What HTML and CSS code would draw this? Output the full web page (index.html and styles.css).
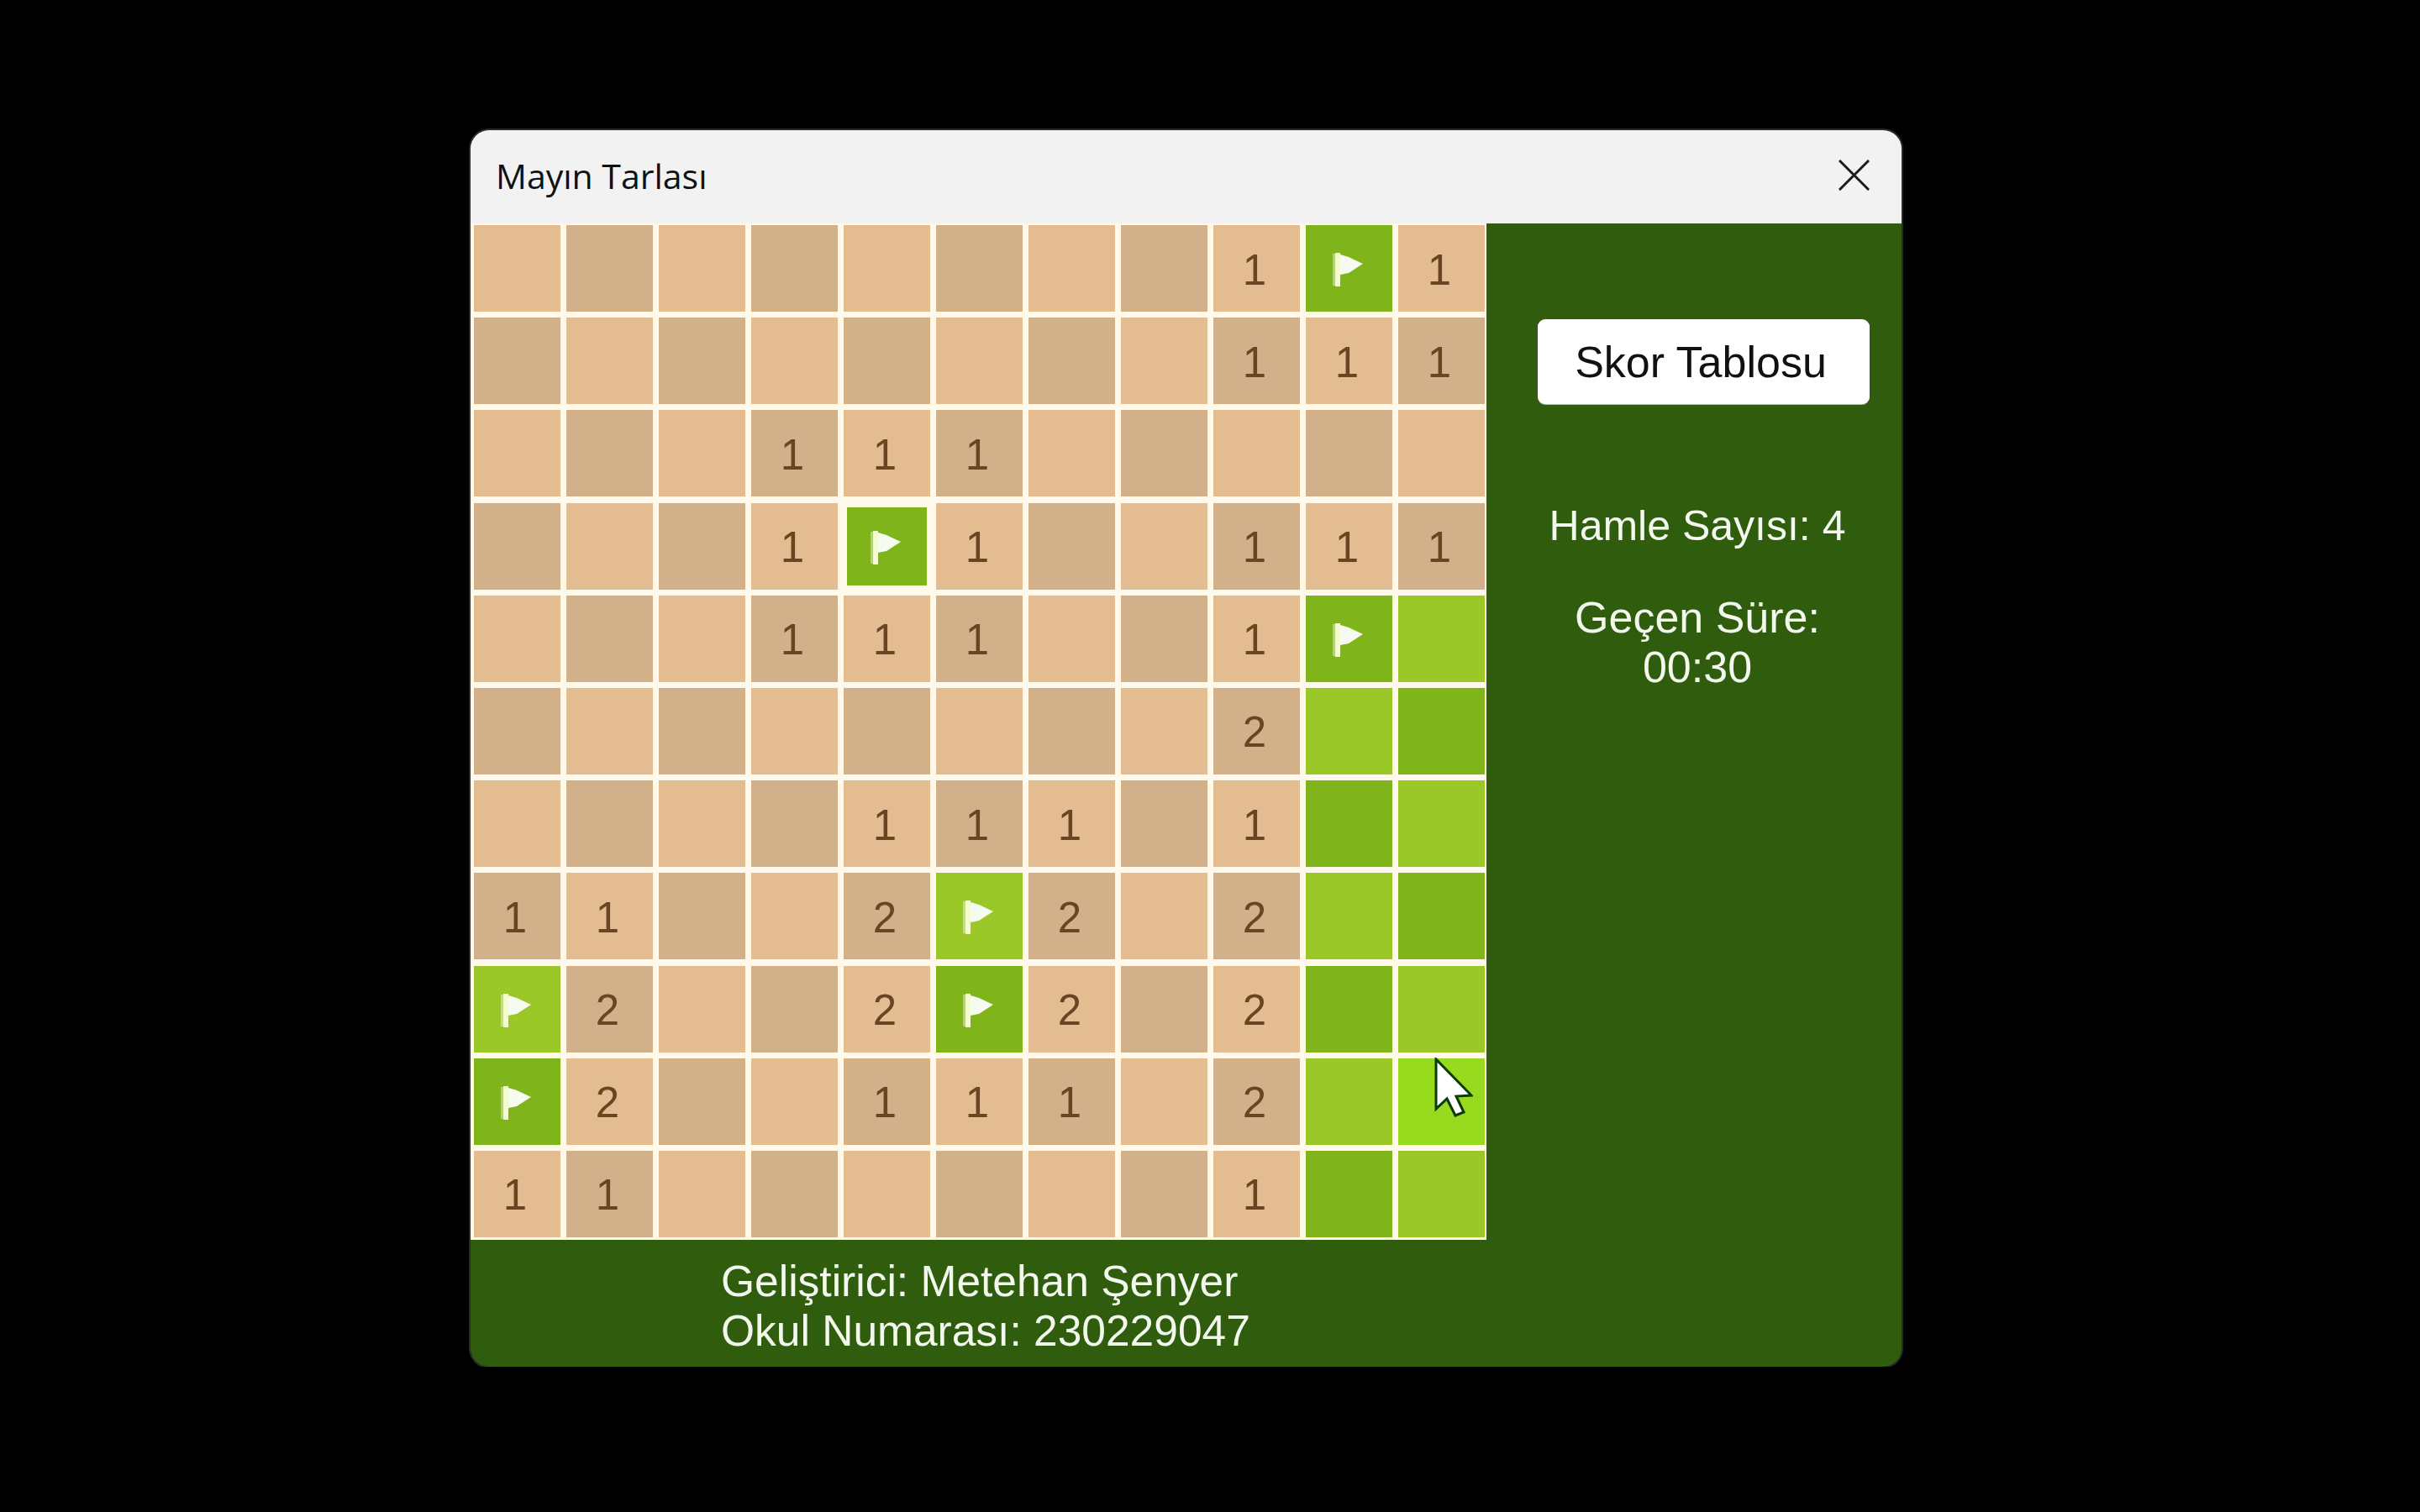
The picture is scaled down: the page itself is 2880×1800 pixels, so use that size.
FILE: index.html
```html
<!DOCTYPE html>
<html lang="tr">
<head>
    <meta charset="UTF-8">
    <title>Mayın Tarlası</title>
    <link rel="stylesheet" href="styles.css">
</head>
<body>
    <svg class="defs">
        <symbol id="flag" viewBox="0 0 40 40">
            <rect x="3" y="1" width="3" height="38" fill="#fff" fill-opacity="0.4"/>
            <rect x="6" y="0" width="6" height="40" fill="#f4fbd0"/>
            <path d="M12 2 L22 5 L39 13 L22 24 L12 26 Z" fill="#f6fbf2"/>
        </symbol>
    </svg>

    <div class="window">
        <div class="titlebar">
            <span class="title">Mayın Tarlası</span>
            <svg class="close" viewBox="0 0 37 37"><path d="M1 1 L36 36 M36 1 L1 36"/></svg>
        </div>
        <div class="content">
            <div class="left">
                <div class="board">
                    <div class="cell l"></div><div class="cell d"></div><div class="cell l"></div><div class="cell d"></div><div class="cell l"></div><div class="cell d"></div><div class="cell l"></div><div class="cell d"></div><div class="cell l">1</div><div class="cell gd"><svg class="flag"><use href="#flag"/></svg></div><div class="cell l">1</div>
                    <div class="cell d"></div><div class="cell l"></div><div class="cell d"></div><div class="cell l"></div><div class="cell d"></div><div class="cell l"></div><div class="cell d"></div><div class="cell l"></div><div class="cell d">1</div><div class="cell l">1</div><div class="cell d">1</div>
                    <div class="cell l"></div><div class="cell d"></div><div class="cell l"></div><div class="cell d">1</div><div class="cell l">1</div><div class="cell d">1</div><div class="cell l"></div><div class="cell d"></div><div class="cell l"></div><div class="cell d"></div><div class="cell l"></div>
                    <div class="cell d"></div><div class="cell l"></div><div class="cell d"></div><div class="cell l">1</div><div class="cell gd focus"><svg class="flag"><use href="#flag"/></svg></div><div class="cell l">1</div><div class="cell d"></div><div class="cell l"></div><div class="cell d">1</div><div class="cell l">1</div><div class="cell d">1</div>
                    <div class="cell l"></div><div class="cell d"></div><div class="cell l"></div><div class="cell d">1</div><div class="cell l">1</div><div class="cell d">1</div><div class="cell l"></div><div class="cell d"></div><div class="cell l">1</div><div class="cell gd"><svg class="flag"><use href="#flag"/></svg></div><div class="cell gl"></div>
                    <div class="cell d"></div><div class="cell l"></div><div class="cell d"></div><div class="cell l"></div><div class="cell d"></div><div class="cell l"></div><div class="cell d"></div><div class="cell l"></div><div class="cell d">2</div><div class="cell gl"></div><div class="cell gd"></div>
                    <div class="cell l"></div><div class="cell d"></div><div class="cell l"></div><div class="cell d"></div><div class="cell l">1</div><div class="cell d">1</div><div class="cell l">1</div><div class="cell d"></div><div class="cell l">1</div><div class="cell gd"></div><div class="cell gl"></div>
                    <div class="cell d">1</div><div class="cell l">1</div><div class="cell d"></div><div class="cell l"></div><div class="cell d">2</div><div class="cell gl"><svg class="flag"><use href="#flag"/></svg></div><div class="cell d">2</div><div class="cell l"></div><div class="cell d">2</div><div class="cell gl"></div><div class="cell gd"></div>
                    <div class="cell gl"><svg class="flag"><use href="#flag"/></svg></div><div class="cell d">2</div><div class="cell l"></div><div class="cell d"></div><div class="cell l">2</div><div class="cell gd"><svg class="flag"><use href="#flag"/></svg></div><div class="cell l">2</div><div class="cell d"></div><div class="cell l">2</div><div class="cell gd"></div><div class="cell gl"></div>
                    <div class="cell gd"><svg class="flag"><use href="#flag"/></svg></div><div class="cell l">2</div><div class="cell d"></div><div class="cell l"></div><div class="cell d">1</div><div class="cell l">1</div><div class="cell d">1</div><div class="cell l"></div><div class="cell d">2</div><div class="cell gl"></div><div class="cell hover"></div>
                    <div class="cell l">1</div><div class="cell d">1</div><div class="cell l"></div><div class="cell d"></div><div class="cell l"></div><div class="cell d"></div><div class="cell l"></div><div class="cell d"></div><div class="cell l">1</div><div class="cell gd"></div><div class="cell gl"></div>
                </div>
                <div class="footer">
                    <div>Geliştirici: Metehan Şenyer</div>
                    <div>Okul Numarası: 230229047</div>
                </div>
            </div>
            <div class="side">
                <button class="score-btn">Skor Tablosu</button>
                <div class="moves">Hamle Sayısı: 4</div>
                <div class="time">Geçen Süre:<br>00:30</div>
            </div>
        </div>
        <svg class="cursor" viewBox="0 0 46 72">
            <path d="M2 2 L2 61 L15 49 L25 69 L35 65 L26 46 L44 45 Z"/>
        </svg>
    </div>
</body>
</html>
```

FILE: styles.css
```css
body {
    margin: 0;
    padding: 155px 0 0 560px;
    background-color: #000;
    font-family: "Liberation Sans", Arial, sans-serif;
}

.defs {
    display: none;
}

.window {
    position: relative;
    width: 1703px;
    height: 1472px;
    border-radius: 22px;
    overflow: hidden;
    display: flex;
    flex-direction: column;
    background-color: #305c0e;
    box-shadow: 0 0 0 2px #2a2a2a;
}

.titlebar {
    height: 111px;
    flex: none;
    box-sizing: border-box;
    background-color: #f2f2f2;
    display: flex;
    align-items: center;
    justify-content: space-between;
    padding: 0 38px 4px 30px;
}

.title {
    font-family: "Open Sans", sans-serif;
    font-size: 41px;
    color: #111;
}

.close {
    width: 37px;
    height: 37px;
}

.close path {
    stroke: #1a1a1a;
    stroke-width: 3;
    fill: none;
}

.content {
    display: flex;
    flex: 1;
}

.left {
    width: 1209px;
    flex: none;
}

.board {
    display: grid;
    grid-template-columns: repeat(11, 103px);
    grid-auto-rows: 103px;
    column-gap: 7px;
    row-gap: 7.2px;
    padding: 2px 2px 3px 4px;
    background-color: #fff9ec;
}

.cell {
    display: flex;
    align-items: center;
    justify-content: center;
    box-sizing: border-box;
    padding: 3px 5px 0 0;
    font-size: 51px;
    color: #6b4423;
}

.l {
    background-color: #e3bc91;
}

.d {
    background-color: #d2b18a;
}

.gl {
    background-color: #9ac828;
}

.gd {
    background-color: #7fb51a;
}

.hover {
    background-color: #97da1e;
}

.focus {
    margin: 5px 4px;
}

.flag {
    width: 40px;
    height: 40px;
}

.footer {
    padding: 20px 0 0 298px;
    font-size: 51.5px;
    line-height: 59px;
    color: #f2f8ee;
}

.side {
    flex: 1;
    display: flex;
    flex-direction: column;
    padding-top: 114px;
    color: #f2f8ee;
    font-size: 52px;
    line-height: 59px;
    text-align: center;
}

.score-btn {
    align-self: flex-start;
    width: 395px;
    height: 101px;
    margin-left: 61px;
    padding: 0 7px 0 0;
    background-color: #fff;
    border: none;
    border-radius: 9px;
    box-shadow: 0 1px 0 #b8b8b8;
    font-family: inherit;
    font-size: 52px;
    color: #111;
}

.moves {
    margin: 116px 0 0 8px;
    font-size: 50px;
}

.time {
    margin: 50px 0 0 8px;
}

.cursor {
    position: absolute;
    left: 1147px;
    top: 1104px;
    width: 46px;
    height: 72px;
}

.cursor path {
    fill: #fff;
    stroke: #0b3a0b;
    stroke-width: 3;
}
```
